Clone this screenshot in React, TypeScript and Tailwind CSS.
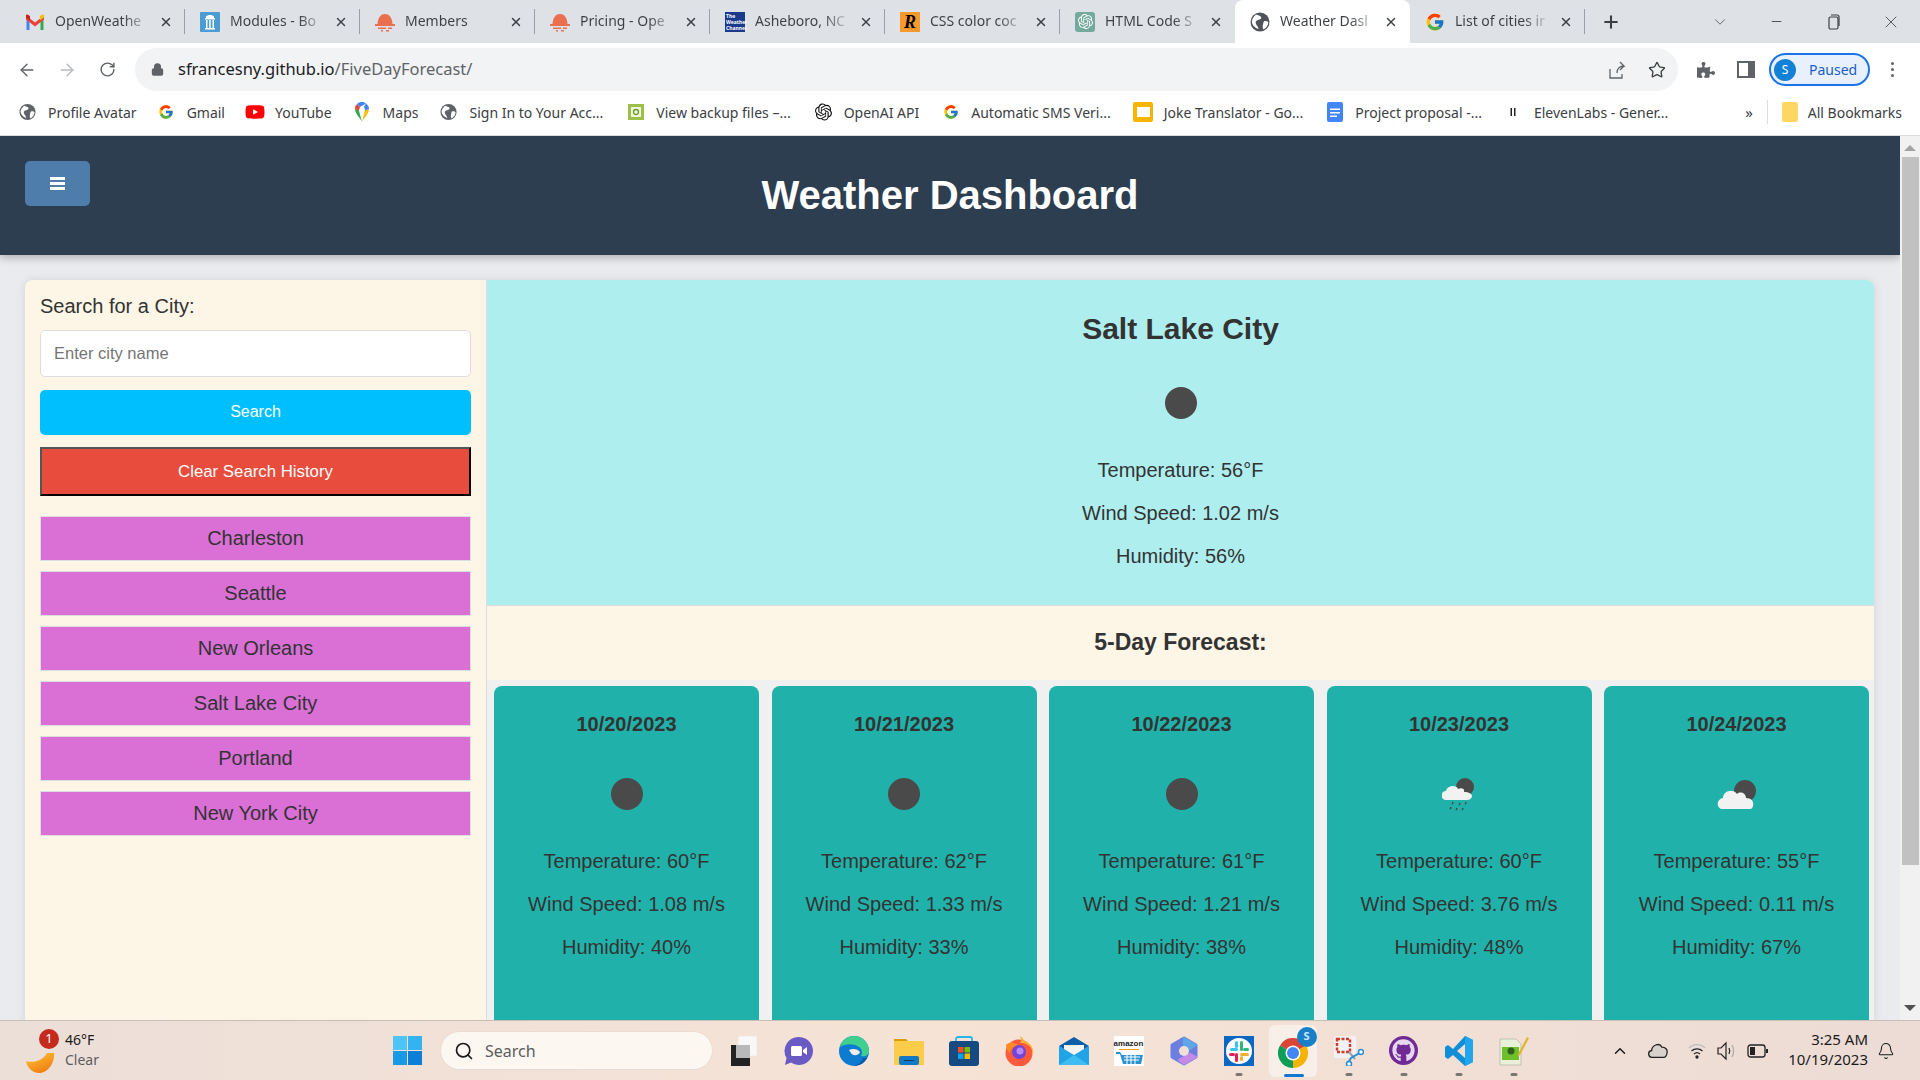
import { ArrowLeft, ArrowRight, RotateCw, Lock, Star, X, Plus, ChevronDown, Minus, ChevronUp, Bell, Search } from 'lucide-react';
import { FcGoogle } from 'react-icons/fc';
import { SiOpenai } from 'react-icons/si';
import { FaGithub, FaPuzzlePiece, FaYoutube } from 'react-icons/fa';

const Globe = ({ size = 18, color = '#5f6368' }: { size?: number; color?: string }) => (
  <svg width={size} height={size} viewBox="0 0 20 20">
    <circle cx="10" cy="10" r="9.5" fill={color} />
    <path d="M6 2.5c2 1 4 1 5 2.5s-1 2.5-3 3-3 2-2 4 2 2 2.500 5C5 16 2 13 1.800 9.500 2 7 4 4 6 2.500zM15 9c2 0 3 .5 3.300 1.500-.3 3-2 5.500-4.800 7-1-2-1-3-.5-5s.5-3.500 2-3.500z" fill="#fff" />
  </svg>
);

const Gmail = () => (
  <svg width="20" height="16" viewBox="0 0 20 16">
    <path d="M1.500 16V4l3 2v10z" fill="#4285f4" />
    <path d="M15.500 16V6l3-2v12z" fill="#34a853" />
    <path d="M1 1.500l9 7 9-7v4l-9 7-9-7z" fill="#ea4335" />
    <path d="M1 1.500C1 .5 2.500 0 3.500 1L5 2.200v4L1 3.500z" fill="#c5221f" />
    <path d="M19 1.500C19 .5 17.500 0 16.500 1L15 2.200v4l4-2.700z" fill="#fbbc04" />
  </svg>
);

const Unc = () => (
  <svg width="20" height="20" viewBox="0 0 20 20">
    <rect width="20" height="20" rx="1" fill="#4b9cd3" />
    <path d="M5 6h10v1.500H5zM6 8h1.500v8H6zM9.200 8h1.500v8H9.200zM12.500 8H14v8h-1.500zM5 16h10v1.500H5zM6 4.500C8 2.500 12 2.500 14 4.500V6H6z" fill="#fff" />
  </svg>
);

const OpenWeather = () => (
  <svg width="20" height="20" viewBox="0 0 20 20">
    <path d="M2.500 12C3 5 6 2 10 2s7 3 7.500 10z" fill="#ea6f4e" />
    <path d="M0 12h20v2H0zM3 15.500h8v1.500H3zM13 15.500h4v1.500h-4zM6 18h2v1.500H6zM11 18h3v1.500h-3z" fill="#ea6f4e" />
  </svg>
);

const WeatherChannel = () => (
  <div className="flex h-5 w-5 flex-col justify-center bg-[#1b3a8c] pl-px text-[5px] font-bold leading-[6px] text-white">
    <span>The</span>
    <span>Weather</span>
    <span>Channel</span>
  </div>
);

const CssR = () => (
  <div className="flex h-5 w-5 items-center justify-center bg-[#f7992d] font-['Liberation_Serif',serif] text-[18px] font-bold italic leading-none text-black">
    R
  </div>
);

const GptTile = () => (
  <div className="flex h-5 w-5 items-center justify-center rounded-[3px] bg-[#74aa9c] text-white">
    <SiOpenai size={15} />
  </div>
);

const BackupIcon = () => (
  <svg width="16" height="16" viewBox="0 0 16 16">
    <rect width="16" height="16" fill="#9cc04a" />
    <rect x="3" y="3" width="10" height="10" fill="#f1f6df" />
    <circle cx="8" cy="8" r="2.500" fill="none" stroke="#6c9a26" strokeWidth="1.300" />
  </svg>
);

const MapsPin = () => (
  <svg width="14" height="20" viewBox="0 0 14 20">
    <path d="M7 20C5.500 16 0 12 0 7l3.800 1 3.200 12z" fill="#34a853" />
    <path d="M7 20c1.500-4 7-8 7-13l-4 1z" fill="#fbbc04" />
    <path d="M2 2C.5 3.500 0 5 0 7l4 1.500L5 5z" fill="#ea4335" />
    <path d="M2 2C3.500.5 5 0 7 0c1.500 0 3 .5 4 1.500L5 5z" fill="#4285f4" />
    <path d="M11 1.500C13 3 14 5 14 7l-4 1.500-1-4z" fill="#4285f4" />
    <circle cx="7" cy="7" r="2.400" fill="#fff" />
  </svg>
);

const Slides = () => (
  <div className="flex h-[20px] w-[20px] shrink-0 items-center justify-center rounded-[2px] bg-[#f7b500]">
    <div className="h-[10px] w-[13px] bg-white" />
  </div>
);

const Docs = () => (
  <svg width="20" height="20" viewBox="0 0 20 20" className="w-5 shrink-0">
    <rect x="2" y="0" width="16" height="20" rx="2" fill="#4285f4" />
    <path d="M5 6.500h10V8H5zM5 10h10v1.500H5zM5 13.500h7V15H5z" fill="#fff" />
  </svg>
);

const Eleven = () => (
  <svg width="16" height="16" viewBox="0 0 16 16">
    <rect x="5.500" y="4" width="1.500" height="8" fill="#222" />
    <rect x="9" y="4" width="1.500" height="8" fill="#222" />
  </svg>
);

const tabs = [
  { title: 'OpenWeathe', icon: <Gmail /> },
  { title: 'Modules - Bo', icon: <Unc /> },
  { title: 'Members', icon: <OpenWeather /> },
  { title: 'Pricing - Ope', icon: <OpenWeather /> },
  { title: 'Asheboro, NC', icon: <WeatherChannel /> },
  { title: 'CSS color coc', icon: <CssR /> },
  { title: 'HTML Code S', icon: <GptTile /> },
  { title: 'Weather Dasl', icon: <Globe size={20} color="#50545a" />, active: true },
  { title: 'List of cities ir', icon: <FcGoogle size={20} /> },
];

const bookmarks = [
  { title: 'Profile Avatar', icon: <Globe />, gap: 'mr-[21px]' },
  { title: 'Gmail', icon: <FcGoogle size={16} />, gap: 'mr-[21px]' },
  { title: 'YouTube', icon: <FaYoutube size={20} color="#f00" className="-mx-0.5" />, gap: 'mr-[22px]' },
  { title: 'Maps', icon: <MapsPin />, gap: 'mr-[22px]' },
  { title: 'Sign In to Your Acc...', icon: <Globe />, gap: 'mr-[24px]' },
  { title: 'View backup files –...', icon: <BackupIcon />, gap: 'mr-[24px]' },
  { title: 'OpenAI API', icon: <SiOpenai size={18} color="#111" />, gap: 'mr-[23px]' },
  { title: 'Automatic SMS Veri...', icon: <FcGoogle size={16} />, gap: 'mr-[24px]' },
  { title: 'Joke Translator - Go...', icon: <Slides />, gap: 'mr-[23px]' },
  { title: 'Project proposal -...', icon: <Docs />, gap: 'mr-[23px]' },
  { title: 'ElevenLabs - Gener...', icon: <Eleven />, gap: 'mr-[22px]' },
];

const cities = ['Charleston', 'Seattle', 'New Orleans', 'Salt Lake City', 'Portland', 'New York City'];

const forecast = [
  { date: '10/20/2023', temp: 60, wind: '1.08', hum: 40, kind: 'clear' },
  { date: '10/21/2023', temp: 62, wind: '1.33', hum: 33, kind: 'clear' },
  { date: '10/22/2023', temp: 61, wind: '1.21', hum: 38, kind: 'clear' },
  { date: '10/23/2023', temp: 60, wind: '3.76', hum: 48, kind: 'rain' },
  { date: '10/24/2023', temp: 55, wind: '0.11', hum: 67, kind: 'cloud' },
];

const Moon = () => <div className="h-8 w-8 rounded-full bg-[#4a4a4a]" />;

const RainCloud = () => (
  <svg width="34" height="38" viewBox="0 0 34 38">
    <circle cx="23" cy="12" r="9" fill="#4a4a4a" />
    <path d="M4 25a4.500 4.500 0 0 1 0-9c1-5 10-7 12-2 4-2 7 0 6 3 5 0 8 2 8 4s-2 4-5 4z" fill="#f2f2f2" />
    <path d="M11 27l-1 3M18 28l-1 3M24 27l-1 3M9 32l-1 3M15 33l-1 3M21 33l-1 3" stroke="#4a4a4a" strokeWidth="1.500" strokeDasharray="2 1" />
  </svg>
);

const NightCloud = () => (
  <svg width="40" height="34" viewBox="0 0 40 34">
    <circle cx="28" cy="14" r="11" fill="#4a4a4a" />
    <path d="M6 32c-7 0-7-10 0-11 0-7 10-10 14-4 3-3 9-1 9 4 6 0 8 4 7 8-.5 2-1 3-3 3z" fill="#f2f2f2" />
  </svg>
);

const FileExplorer = () => (
  <svg width="30" height="28" viewBox="0 0 30 28">
    <path d="M0 2h12l3 3H0z" fill="#d89c0c" />
    <rect y="4" width="30" height="24" rx="1" fill="#fbcb4a" />
    <rect x="5" y="19" width="20" height="9" rx="2" fill="#1479c4" />
    <rect x="10" y="23" width="10" height="1" fill="#0a3f6b" />
  </svg>
);

const Apps = [
  {
    id: 'taskview',
    node: (
      <svg width="26" height="30" viewBox="0 0 26 30">
        <rect x="7" y="0" width="19" height="20" fill="#f8f8f8" stroke="#e4e0dc" strokeWidth="0.500" />
        <rect x="0" y="9" width="19" height="21" fill="#222" />
        <rect x="5" y="9" width="14" height="13" fill="#b9b9b9" />
      </svg>
    ),
  },
  {
    id: 'meet',
    node: (
      <svg width="30" height="30" viewBox="0 0 30 30">
        <path d="M15 1a14 14 0 1 1-8 25.500L1 29l1.500-7A14 14 0 0 1 15 1z" fill="#6a5bc4" />
        <rect x="7" y="10" width="11" height="10" rx="1.500" fill="#fff" />
        <path d="M19 14l4-3v8l-4-3z" fill="#fff" />
      </svg>
    ),
  },
  {
    id: 'edge',
    node: (
      <svg width="30" height="30" viewBox="0 0 30 30">
        <circle cx="15" cy="15" r="15" fill="#0d7bd0" />
        <path d="M1 11C3 3 10 0 15 0c9 0 15 7 15 15 0 4-4 6-8 5 2-3 1-7-2-9-6-4-14-3-19 0z" fill="#3fcf8e" />
        <path d="M10 14c4-2 9-1 11 2-1 4-8 4-9 1z" fill="#f4ece6" />
        <path d="M28 22c-3 6-9 8-13 8 3-1 7-3 9-8z" fill="#0a5aa8" />
      </svg>
    ),
  },
  { id: 'files', node: <FileExplorer /> },
  {
    id: 'store',
    node: (
      <svg width="30" height="30" viewBox="0 0 30 30">
        <path d="M7 6V3a2 2 0 0 1 2-2h12a2 2 0 0 1 2 2v3" fill="none" stroke="#29b6e8" strokeWidth="1.800" />
        <rect y="5" width="30" height="25" rx="3" fill="#174a80" />
        <rect x="9" y="11" width="5.500" height="5.500" fill="#f25022" />
        <rect x="15.500" y="11" width="5.500" height="5.500" fill="#7fba00" />
        <rect x="9" y="17.500" width="5.500" height="5.500" fill="#00a4ef" />
        <rect x="15.500" y="17.500" width="5.500" height="5.500" fill="#ffb900" />
      </svg>
    ),
  },
  {
    id: 'firefox',
    node: (
      <svg width="30" height="30" viewBox="0 0 30 30">
        <circle cx="15" cy="17" r="13.500" fill="#ff5a3c" />
        <path d="M16 0c5 3 2 5 7 6 5 3 7 8 6 12C28 9 22 7 16 7 18 5 17 3 16 0z" fill="#ffb52e" />
        <path d="M2 9c2-2 5-3 7-2 3 0 5 2 6 3-5 0-9 3-9 7-3-2-4-5-4-8z" fill="#ff8a1f" />
        <circle cx="15" cy="16" r="7" fill="#7543d6" />
        <circle cx="16" cy="15" r="3.500" fill="#b889f4" />
      </svg>
    ),
  },
  {
    id: 'mail',
    node: (
      <svg width="30" height="28" viewBox="0 0 30 28">
        <path d="M0 9L15 0l15 9-15 10z" fill="#0f5fa8" />
        <path d="M5 8h20v8l-10 5-10-5z" fill="#f3f3f3" />
        <path d="M0 9l15 9 15-9v19H0z" fill="#20a4e6" />
        <path d="M0 28l15-10 15 10z" fill="#3fbdf0" />
      </svg>
    ),
  },
  {
    id: 'amazon',
    node: (
      <div className="flex h-[30px] w-[30px] flex-col items-center bg-white pt-[3px]">
        <span className="font-['Liberation_Sans',sans-serif] text-[8px] font-bold leading-[9px] text-[#222]">amazon</span>
        <div className="mt-[1px] h-px w-[20px] bg-[#f79c20]" />
        <svg width="30" height="15" viewBox="0 0 30 15" className="mt-[1px]">
          <path d="M2 1h4l2 3h21l-2 9H9L6 3H2z" fill="#2a93cf" />
          <path d="M10 6h16M10 9h15M13 4v9M17 4v9M21 4v9" stroke="#fff" strokeWidth="1" />
        </svg>
      </div>
    ),
  },
  {
    id: 'copilot',
    node: (
      <svg width="28" height="30" viewBox="0 0 28 30">
        <path d="M14 2l12 7v12l-12 7-12-7V9z" fill="#6a7fe0" stroke="#6a7fe0" strokeWidth="3" strokeLinejoin="round" />
        <path d="M14 2l12 7-6 4-6-3z" fill="#5fa8e8" stroke="#5fa8e8" strokeWidth="2" strokeLinejoin="round" />
        <path d="M26 21l-12 7-5-4 11-6z" fill="#c58ae8" stroke="#c58ae8" strokeWidth="2" strokeLinejoin="round" />
        <circle cx="14" cy="15" r="5" fill="#f1dfd5" />
      </svg>
    ),
  },
  {
    id: 'slack',
    dot: true,
    node: (
      <svg width="30" height="30" viewBox="0 0 30 30">
        <rect width="30" height="30" fill="#0b67c2" />
        <circle cx="15" cy="15" r="13" fill="#fff" />
        <rect x="6" y="12" width="8" height="3" rx="1.500" fill="#36c5f0" />
        <rect x="11" y="5" width="3" height="7" rx="1.500" fill="#36c5f0" />
        <rect x="16" y="5" width="3" height="10" rx="1.500" fill="#2eb67d" />
        <rect x="19" y="12" width="6" height="3" rx="1.500" fill="#2eb67d" />
        <rect x="16" y="17" width="9" height="3" rx="1.500" fill="#ecb22e" />
        <rect x="16" y="20" width="3" height="5" rx="1.500" fill="#ecb22e" />
        <rect x="11" y="17" width="3" height="9" rx="1.500" fill="#e01e5a" />
        <rect x="5" y="17" width="6" height="3" rx="1.500" fill="#e01e5a" />
      </svg>
    ),
  },
  {
    id: 'chrome',
    active: true,
    node: (
      <div className="relative h-[32px] w-[32px]">
        <svg width="30" height="30" viewBox="0 0 30 30" className="absolute left-0 top-[3px]">
          <path d="M15 15L2 7.500A15 15 0 0 1 28 7.500z" fill="#db4437" />
          <path d="M15 15L28 7.500A15 15 0 0 1 15 30z" fill="#f4b400" />
          <path d="M15 15L15 30A15 15 0 0 1 2 7.500z" fill="#0f9d58" />
          <circle cx="15" cy="15" r="7.500" fill="#fff" />
          <circle cx="15" cy="15" r="6" fill="#4285f4" />
        </svg>
        <div className="absolute -right-[7px] -top-[8px] flex h-[20px] w-[20px] items-center justify-center rounded-full bg-[#1a7fc9] font-['Noto_Sans',sans-serif] text-[11px] font-bold text-[#cfe7f8]">
          S
        </div>
      </div>
    ),
  },
  {
    id: 'snip',
    dot: true,
    node: (
      <svg width="30" height="30" viewBox="0 0 30 30">
        <rect x="0" y="0" width="22" height="22" rx="2" fill="#f2f2f4" />
        <rect x="3" y="3" width="13" height="13" fill="none" stroke="#d13b2a" strokeWidth="2.500" strokeDasharray="3 1.500" />
        <path d="M15 16l6 7" stroke="#9aa0a6" strokeWidth="2" />
        <path d="M29 15L17 22l-3 5" fill="none" stroke="#2a8fd8" strokeWidth="2" />
        <circle cx="27" cy="16" r="2.500" fill="#fff" stroke="#2a8fd8" strokeWidth="1.500" />
        <circle cx="15" cy="28" r="2.500" fill="#fff" stroke="#2a8fd8" strokeWidth="1.500" />
      </svg>
    ),
  },
  {
    id: 'github',
    dot: true,
    node: (
      <div className="flex h-[29px] w-[29px] items-center justify-center rounded-full bg-[#6f2a94]">
        <FaGithub size={23} color="#e6d6ef" />
      </div>
    ),
  },
  {
    id: 'vscode',
    dot: true,
    node: (
      <svg width="30" height="30" viewBox="0 0 30 30">
        <path d="M21 0l8 4v22l-8 4-12-11-5 4-3-2v-10l3-2 5 4z" fill="#0f8fd8" />
        <path d="M21 8v14l-8-7z" fill="#f1dfd5" />
        <path d="M21 0l8 4v22l-8 4z" fill="#21a6ee" />
      </svg>
    ),
  },
  {
    id: 'notepad',
    dot: true,
    node: (
      <svg width="30" height="30" viewBox="0 0 30 30">
        <path d="M1 3h16l5 5v21H1z" fill="#e8f0d8" stroke="#999" strokeWidth="0.500" />
        <rect x="3" y="11" width="17" height="13" fill="#6fbe2c" />
        <circle cx="12" cy="15" r="3.500" fill="#2f5f1c" />
        <path d="M28 1l2 1-9 17-2 2v-3z" fill="#e4b22e" />
      </svg>
    ),
  },
];

const Tray = () => (
  <div className="ml-auto flex h-full items-center text-[#1b1b1b]">
    <ChevronUp size={18} className="mr-[19px]" />
    <svg width="21" height="17" viewBox="0 0 24 20" className="mr-[19px]">
      <path d="M5 18a4 4 0 0 1-1-8c0-6 9-10 12-4 4 0 7 3 6 7-.5 3-2 5-4 5z" fill="#d9d1cb" stroke="#222" strokeWidth="1.500" />
    </svg>
    <svg width="18" height="18" viewBox="0 0 18 18" className="mr-[11px]" fill="none" stroke="#222" strokeWidth="1.300">
      <path d="M1 6a11 11 0 0 1 16 0" stroke="#bbb" />
      <path d="M3.500 9a8 8 0 0 1 11 0" />
      <path d="M6 12a4.500 4.500 0 0 1 6 0" />
      <circle cx="9" cy="15" r="1" fill="#222" />
    </svg>
    <svg width="20" height="20" viewBox="0 0 20 20" className="mr-[10px]" fill="none" stroke="#222" strokeWidth="1.200">
      <path d="M1 7h3l5-5v16l-5-5H1z" />
      <path d="M12 7c1 2 1 4 0 6" />
      <path d="M15 4c2 3 2 9 0 12" stroke="#aaa" />
    </svg>
    <svg width="22" height="14" viewBox="0 0 22 14" className="mr-[17px]">
      <rect x="1" y="1" width="17" height="12" rx="2.500" fill="none" stroke="#222" strokeWidth="1.300" />
      <rect x="3" y="3" width="5" height="8" fill="#222" />
      <rect x="19" y="5" width="2" height="4" fill="#222" />
    </svg>
    <div className="-mt-[4px] w-[82px] text-right font-['Noto_Sans',sans-serif] text-[15px] leading-[20px] text-[#1b1b1b]">
      <div>3:25 AM</div>
      <div>10/19/2023</div>
    </div>
    <Bell size={18} strokeWidth={1.400} className="ml-[9px] mr-[25px]" />
  </div>
);

const Taskbar = () => (
  <footer className="flex h-[60px] shrink-0 items-center border-t border-[#c8bfb9] bg-gradient-to-r from-[#ecdfd8] via-[#f6e3d6] to-[#ecdcd5] font-['Noto_Sans',sans-serif]">
    <div className="flex w-[393px] shrink-0 items-center pl-[26px]">
      <div className="relative h-[44px] w-[30px]">
        <svg width="30" height="20" viewBox="0 0 30 20" className="absolute bottom-0 left-0">
          <defs>
            <linearGradient id="crescent" x1="0" y1="0" x2="0.600" y2="1">
              <stop offset="0" stopColor="#ffc53d" />
              <stop offset="1" stopColor="#ef7f10" />
            </linearGradient>
          </defs>
          <path d="M0 8c5 2 16 1 21-8h7c1 10-6 20-15 20C6 20 1 14 0 8z" fill="url(#crescent)" />
        </svg>
        <div className="absolute left-[13px] top-0 flex h-[20px] w-[20px] items-center justify-center rounded-full bg-[#c42b1c] text-[13px] leading-none text-white">
          1
        </div>
      </div>
      <div className="ml-[9px] -mt-[2px] text-[14px] leading-[20px]">
        <div className="text-[#1b1b1b]">46°F</div>
        <div className="text-[#5c5c5c]">Clear</div>
      </div>
    </div>
    <div className="grid h-[29px] w-[29px] shrink-0 grid-cols-2 gap-[1px]">
      <div className="bg-[#4fc5f7]" />
      <div className="bg-[#35b2f0]" />
      <div className="bg-[#1a9ae5]" />
      <div className="bg-[#0e7fd6]" />
    </div>
    <div className="ml-[18px] flex h-[39px] w-[273px] shrink-0 items-center rounded-full border border-[#e8dcd4] bg-[#fdf7f2] pl-[13px] text-[#1b1b1b]">
      <Search size={20} strokeWidth={2} />
      <span className="ml-[11px] text-[16px] text-[#5c5c5c]">Search</span>
    </div>
    <div className="ml-[3px] flex h-full items-center">
      {Apps.map((app) => (
        <div key={app.id} className="relative flex h-full w-[55px] items-center justify-center">
          {app.active && (
            <>
              <div className="absolute left-[3px] top-[4px] h-[52px] w-[48px] rounded-md bg-[#f8efe9]" />
              <div className="absolute bottom-[3px] left-1/2 h-[3px] w-[20px] -translate-x-1/2 rounded-full bg-[#0a78d4]" />
            </>
          )}
          {app.dot && <div className="absolute bottom-[4px] left-1/2 h-[3px] w-[7px] -translate-x-1/2 rounded-full bg-[#7c7672]" />}
          <div className="relative">{app.node}</div>
        </div>
      ))}
    </div>
    <Tray />
  </footer>
);

const BrowserChrome = () => (
  <div className="shrink-0 bg-white font-['Noto_Sans',sans-serif]">
    <div className="flex h-[43px] items-end bg-[#dee1e6] pl-[10px]">
      {tabs.map((tab, i) => {
        const nextActive = tabs[i + 1]?.active;
        return (
          <div
            key={tab.title}
            className={
              tab.active
                ? 'relative flex h-[43px] w-[175px] shrink-0 items-center rounded-t-lg bg-white pl-[15px]'
                : 'relative flex h-[43px] w-[175px] shrink-0 items-center pl-[15px]'
            }
          >
            <div className="flex w-5 shrink-0 justify-center">{tab.icon}</div>
            <span className="ml-[10px] w-[95px] shrink-0 whitespace-nowrap bg-gradient-to-r from-[#3c4043] from-[72%] to-[#dee1e6] bg-clip-text pb-[2px] text-[14px] text-transparent">
              {tab.title}
            </span>
            <X size={14} strokeWidth={2.500} className="ml-[9px] shrink-0 text-[#3c4043]" />
            {!tab.active && !nextActive && <div className="absolute right-0 top-[9px] h-[25px] w-px bg-[#9aa0a6]" />}
          </div>
        );
      })}
      <div className="flex h-[43px] w-[52px] shrink-0 items-center justify-center">
        <Plus size={20} strokeWidth={2.500} className="text-[#3c4043]" />
      </div>
      <div className="ml-auto flex h-[43px] items-center pr-px text-[#3c4043]">
        <div className="flex w-[57px] justify-center">
          <ChevronDown size={18} strokeWidth={1} />
        </div>
        <div className="flex w-[57px] justify-center">
          <Minus size={15} strokeWidth={1.400} />
        </div>
        <div className="flex w-[57px] justify-center">
          <svg width="14" height="16" viewBox="0 0 14 16" fill="none" stroke="#3c4043" strokeWidth="1.200">
            <rect x="2" y="3" width="9" height="12" rx="1.500" />
            <path d="M4 1h6a2 2 0 0 1 2 2v9" />
          </svg>
        </div>
        <div className="flex w-[57px] justify-center">
          <X size={20} strokeWidth={1} />
        </div>
      </div>
    </div>
    <div className="flex h-[48px] items-start pl-[7px] pt-[5px]">
      <div className="flex h-[43px] items-center text-[#5f6368]">
        <div className="flex w-[40px] justify-center">
          <ArrowLeft size={20} strokeWidth={1.600} />
        </div>
        <div className="flex w-[40px] justify-center text-[#b6b9bd]">
          <ArrowRight size={20} strokeWidth={1.600} />
        </div>
        <div className="flex w-[40px] justify-center">
          <RotateCw size={17} strokeWidth={2} />
        </div>
      </div>
      <div className="ml-[8px] flex h-[43px] w-[1543px] shrink-0 items-center rounded-full bg-[#f1f3f4] pl-[16px] pr-[12px]">
        <Lock size={13} strokeWidth={3} fill="#5f6368" className="text-[#5f6368]" />
        <span className="ml-[14px] text-[16.5px] text-[#202124]">
          sfrancesny.github.io<span className="text-[#5f6368]">/FiveDayForecast/</span>
        </span>
        <svg width="20" height="20" viewBox="0 0 20 20" fill="none" stroke="#5f6368" strokeWidth="1.300" className="ml-auto">
          <path d="M3 9v9h12v-4" />
          <path d="M10 13c0-5 3-7 7-7l-4-4M17 6l-4 4" />
        </svg>
        <Star size={18} strokeWidth={1.800} className="ml-[21px] text-[#3c4043]" />
      </div>
      <div className="flex h-[43px] items-center text-[#5f6368]">
        <FaPuzzlePiece size={18} className="ml-[19px]" />
        <div className="ml-[22px] h-[17px] w-[18px] border-[2px] border-r-[7px] border-[#5f6368]" />
        <div className="ml-[14px] flex h-[33px] w-[101px] items-center rounded-full border-2 border-[#1a73e8] bg-[#e8f0fe] pl-[3px]">
          <div className="flex h-[22px] w-[22px] items-center justify-center rounded-full bg-[#1281d6] text-[12px] text-white">S</div>
          <span className="ml-[13px] text-[14px] text-[#1a5fc4]">Paused</span>
        </div>
        <div className="ml-[21px] flex flex-col gap-[3px]">
          <div className="h-[3px] w-[3px] rounded-full bg-[#5f6368]" />
          <div className="h-[3px] w-[3px] rounded-full bg-[#5f6368]" />
          <div className="h-[3px] w-[3px] rounded-full bg-[#5f6368]" />
        </div>
      </div>
    </div>
    <div className="flex h-[45px] items-center border-b border-[#dadce0] pb-[2px] pl-[19px] text-[14px] text-[#3c4043]">
      {bookmarks.map((b) => (
        <div key={b.title} className={`${b.gap} flex items-center gap-[12px] whitespace-nowrap`}>
          <div className="flex w-[17px] justify-center">{b.icon}</div>
          <span>{b.title}</span>
        </div>
      ))}
      <span className="ml-auto text-[15px] leading-none">»</span>
      <div className="ml-[14px] h-[24px] w-px bg-[#dadce0]" />
      <div className="ml-[14px] h-[20px] w-[16px] rounded-[2px] bg-[#fdd663]" />
      <span className="ml-[10px] mr-[18px]">All Bookmarks</span>
    </div>
  </div>
);

const Sidebar = () => (
  <aside className="flex w-[462px] shrink-0 flex-col border-r border-[#ddd] bg-[#fdf5e6] px-[15px] pt-[13px]">
    <label className="text-[20px] leading-[26px] text-[#333]">Search for a City:</label>
    <input
      readOnly
      placeholder="Enter city name"
      className="mt-[11px] h-[47px] w-full rounded-[5px] border border-[#ddd] bg-white px-[13px] text-[16.5px] placeholder:text-[#757575]"
    />
    <button className="mt-[13px] h-[45px] rounded-[5px] bg-[#00bfff] pb-px text-[16px] text-white">Search</button>
    <button className="mt-[12px] h-[49px] border-2 border-b-black border-l-[#555] border-r-black border-t-[#555] bg-[#e74c3c] text-[16.8px] text-white">
      Clear Search History
    </button>
    <div className="mt-[20px] flex flex-col gap-[10px]">
      {cities.map((city) => (
        <button key={city} className="h-[45px] border border-[#ddd] bg-[#da70d6] pb-[2px] text-[20px] text-[#333]">
          {city}
        </button>
      ))}
    </div>
  </aside>
);

const Stats = ({ temp, wind, hum }: { temp: number; wind: string; hum: number }) => (
  <div className="flex flex-col gap-[20px] text-[20px] leading-[23px] text-[#333]">
    <p>Temperature: {temp}°F</p>
    <p>Wind Speed: {wind} m/s</p>
    <p>Humidity: {hum}%</p>
  </div>
);

const ForecastCard = ({ day }: { day: (typeof forecast)[number] }) => (
  <div className="flex h-[420px] min-w-0 flex-1 flex-col items-center rounded-lg bg-[#20b2aa] pt-[27px] text-center">
    <h3 className="text-[20px] font-bold leading-[23px] text-[#333]">{day.date}</h3>
    <div className="mt-[36px] flex h-[44px] items-center justify-center">
      {day.kind === 'clear' && <Moon />}
      {day.kind === 'rain' && <RainCloud />}
      {day.kind === 'cloud' && <NightCloud />}
    </div>
    <div className="mt-[34px]">
      <Stats temp={day.temp} wind={day.wind} hum={day.hum} />
    </div>
  </div>
);

const Dashboard = () => (
  <div className="flex min-h-0 flex-1 overflow-hidden">
    <div className="min-w-0 flex-1 overflow-hidden bg-[#e9ebef]">
      <header className="grid h-[119px] grid-cols-[1fr_auto_1fr] bg-[#2c3e50] shadow-[0_3px_8px_rgba(0,0,0,0.25)]">
        <div>
          <button className="ml-[25px] mt-[25px] flex h-[45px] w-[65px] items-center justify-center rounded-[5px] bg-[#4e7cab]">
            <span className="flex w-[15px] flex-col gap-[2.500px]">
              <span className="h-[2.500px] bg-white" />
              <span className="h-[2.500px] bg-white" />
              <span className="h-[2.500px] bg-white" />
            </span>
          </button>
        </div>
        <h1 className="mt-[36px] text-[40px] font-bold leading-[46px] text-white">Weather Dashboard</h1>
        <div />
      </header>
      <div className="ml-[25px] mr-[26px] mt-[25px] flex h-[800px] overflow-hidden rounded-lg shadow-[0_0_10px_rgba(0,0,0,0.1)]">
        <Sidebar />
        <main className="flex min-w-0 flex-1 flex-col">
          <section className="flex h-[326px] shrink-0 flex-col items-center border-b border-[#ddd] bg-[#afeeee] pt-[31px] text-center">
            <h2 className="text-[30px] font-bold leading-[35px] text-[#333]">Salt Lake City</h2>
            <div className="mt-[35px] flex h-[44px] items-center justify-center">
              <Moon />
            </div>
            <div className="mt-[34px]">
              <Stats temp={56} wind="1.02" hum={56} />
            </div>
          </section>
          <section className="flex h-[74px] shrink-0 items-start justify-center bg-[#fdf5e6] pt-[22px]">
            <h2 className="text-[23px] font-bold leading-[28px] text-[#333]">5-Day Forecast:</h2>
          </section>
          <section className="flex gap-[12.500px] bg-[#f0f0f0] pl-[7px] pr-[5px] pt-[6px]">
            {forecast.map((day) => (
              <ForecastCard key={day.date} day={day} />
            ))}
          </section>
        </main>
      </div>
    </div>
    <div className="flex w-[20px] shrink-0 flex-col items-center bg-[#f1f1f1] font-sans">
      <div className="mt-[9px] h-0 w-0 border-x-[6px] border-b-[6px] border-x-transparent border-b-[#a3a3a3]" />
      <div className="mt-[6px] h-[708px] w-[17px] bg-[#c1c1c1]" />
      <div className="mt-auto mb-[9px] h-0 w-0 border-x-[6px] border-t-[6px] border-x-transparent border-t-[#505050]" />
    </div>
  </div>
);

const App = () => (
  <div className="flex h-screen w-screen flex-col overflow-hidden font-['Liberation_Sans',Arial,sans-serif]">
    <BrowserChrome />
    <Dashboard />
    <Taskbar />
  </div>
);

export default App;
